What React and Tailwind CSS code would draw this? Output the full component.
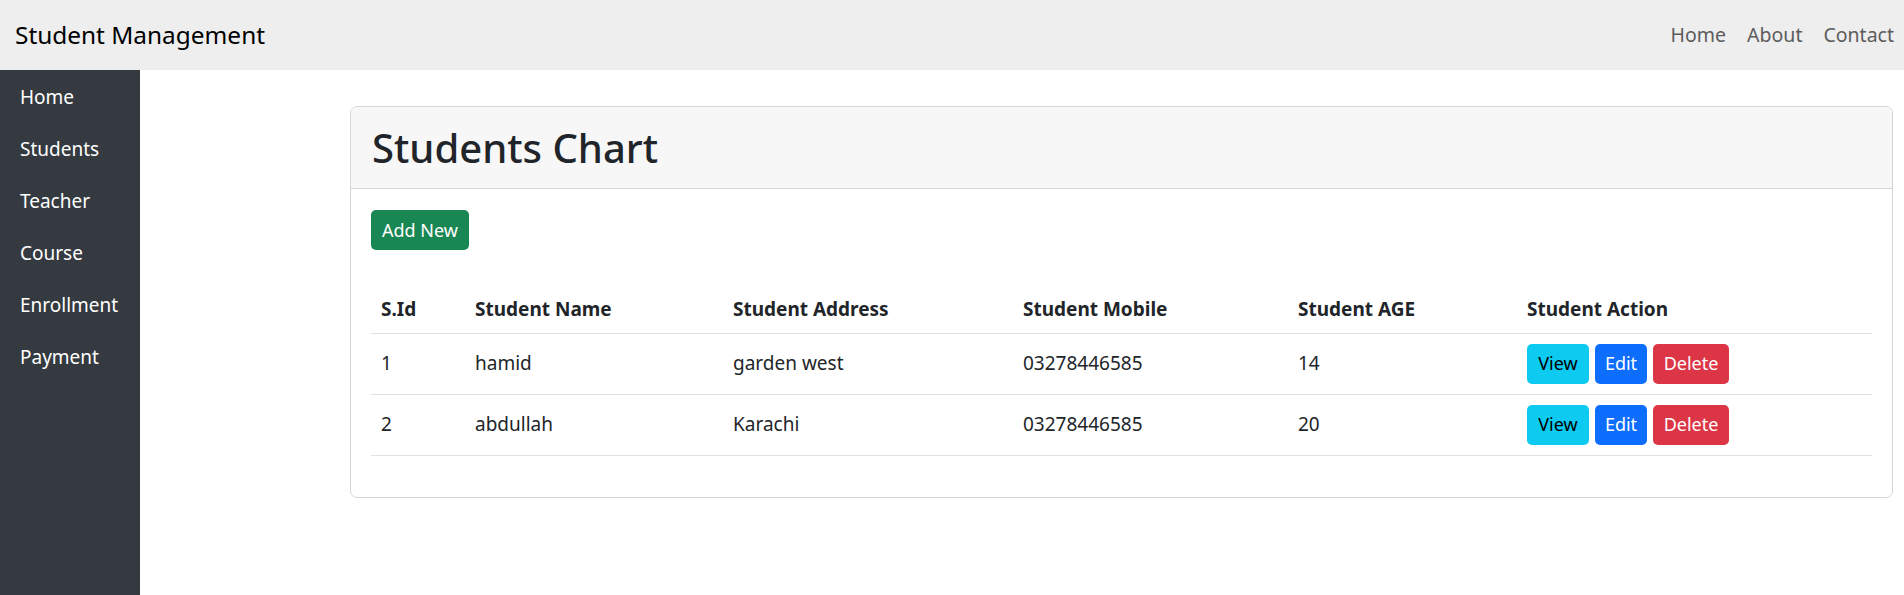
import React from "react";

const students = [
  { id: 1, name: "hamid", address: "garden west", mobile: "03278446585", age: 14 },
  { id: 2, name: "abdullah", address: "Karachi", mobile: "03278446585", age: 20 },
];

const sideLinks = ["Home", "Students", "Teacher", "Course", "Enrollment", "Payment"];

export default function App() {
  return (
    <div className="h-screen flex flex-col text-[#212529] font-['Noto_Sans',sans-serif]">
      {/* Top navbar */}
      <nav className="h-[70px] shrink-0 bg-[#eeeeee] flex items-center justify-between pl-[15px] pr-[10px]">
        <span className="text-[24.4px] text-black">Student Management</span>
        <div className="flex items-center gap-[21px] text-[19.5px] text-[#5c5c5c]">
          <a href="#">Home</a>
          <a href="#">About</a>
          <a href="#">Contact</a>
        </div>
      </nav>

      <div className="flex flex-1 min-h-0">
        {/* Sidebar */}
        <aside className="w-[140px] shrink-0 bg-[#343a40] text-white text-[19px] pt-[1px]">
          {sideLinks.map((l) => (
            <div key={l} className="h-[52px] flex items-center px-[20px]">
              {l}
            </div>
          ))}
        </aside>

        {/* Main */}
        <main className="flex-1 pt-[36px] pl-[210px] pr-[11px]">
          <div className="border border-[#d6d6d6] rounded-[7px] overflow-hidden">
            <div className="h-[82px] bg-[#f7f7f7] border-b border-[#d6d6d6] flex items-center px-[21px]">
              <h1 className="text-[40px] font-medium leading-none">Students Chart</h1>
            </div>
            <div className="p-[20px] pt-[21px] pb-[21px]">
              <button className="h-[40px] px-[11px] rounded-[5px] bg-[#198754] text-white text-[18px]">
                Add New
              </button>
              <table className="w-full mt-[35px] mb-[20px] text-[19px] border-collapse">
                <colgroup>
                  <col className="w-[94px]" />
                  <col className="w-[258px]" />
                  <col className="w-[290px]" />
                  <col className="w-[275px]" />
                  <col className="w-[229px]" />
                  <col />
                </colgroup>
                <thead>
                  <tr className="border-b border-[#dee2e6] text-left">
                    {["S.Id", "Student Name", "Student Address", "Student Mobile", "Student AGE", "Student Action"].map((h) => (
                      <th key={h} className="h-[48px] px-[10px] font-bold">
                        {h}
                      </th>
                    ))}
                  </tr>
                </thead>
                <tbody>
                  {students.map((s) => (
                    <tr key={s.id} className="border-b border-[#dee2e6]">
                      <td className="h-[61px] px-[10px]">{s.id}</td>
                      <td className="px-[10px]">{s.name}</td>
                      <td className="px-[10px]">{s.address}</td>
                      <td className="px-[10px]">{s.mobile}</td>
                      <td className="px-[10px]">{s.age}</td>
                      <td className="px-[10px]">
                        <div className="flex gap-[6px] text-[18px]">
                          <button className="h-[40px] w-[62px] rounded-[5px] bg-[#0dcaf0] text-black">View</button>
                          <button className="h-[40px] w-[52px] rounded-[5px] bg-[#0d6efd] text-white">Edit</button>
                          <button className="h-[40px] w-[76px] rounded-[5px] bg-[#dc3545] text-white">Delete</button>
                        </div>
                      </td>
                    </tr>
                  ))}
                </tbody>
              </table>
            </div>
          </div>
        </main>
      </div>
    </div>
  );
}
